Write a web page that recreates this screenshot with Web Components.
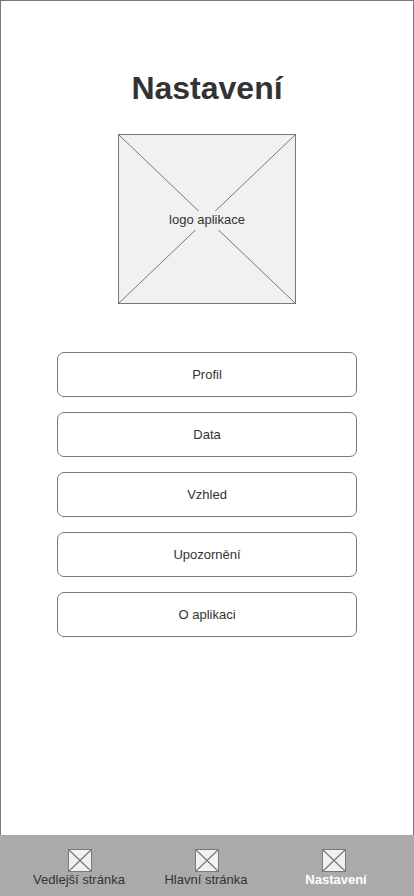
<!DOCTYPE html>
<html lang="cs">
<head>
<meta charset="utf-8">
<title>Nastavení</title>
<style>
html, body { margin: 0; height: 100%; }
body { font: 13px/15px "Liberation Sans", Arial, sans-serif; color: #333; background: #fff; overflow: hidden; }
</style>
</head>
<body>
<app-screen>
  <screen-title>Nastavení</screen-title>
  <image-placeholder>logo aplikace</image-placeholder>
  <settings-menu>
    <menu-button>Profil</menu-button>
    <menu-button>Data</menu-button>
    <menu-button>Vzhled</menu-button>
    <menu-button>Upozornění</menu-button>
    <menu-button>O aplikaci</menu-button>
  </settings-menu>
  <tab-bar slot="footer">
    <tab-item>Vedlejší stránka</tab-item>
    <tab-item>Hlavní stránka</tab-item>
    <tab-item active>Nastavení</tab-item>
  </tab-bar>
</app-screen>
<script>
const define = (name, html) => {
  const template = document.createElement('template');
  template.innerHTML = html;
  customElements.define(name, class extends HTMLElement {
    constructor() {
      super();
      this.attachShadow({ mode: 'open' }).append(template.content.cloneNode(true));
    }
  });
};

define('app-screen', `
<style>
:host { display: flex; flex-direction: column; width: 414px; height: 896px; }
main { flex: 1; box-sizing: border-box; border: 1px solid #797979; border-bottom: 0; display: flex; flex-direction: column; align-items: center; padding-top: 69px; }
</style>
<main><slot></slot></main><slot name="footer"></slot>`);

define('screen-title', `
<style>
:host { display: block; }
h1 { margin: 0; font-size: 32px; line-height: 36px; font-weight: 700; }
</style>
<h1><slot></slot></h1>`);

define('image-placeholder', `
<style>
:host { display: grid; width: 178px; height: 170px; margin-top: 28px; place-items: center; }
svg, span { grid-area: 1 / 1; }
svg { display: block; }
span { background: #f1f1f1; padding: 1px 2px 3px; margin-top: 2px; }
</style>
<svg width="178" height="170" viewBox="0 0 178 170" fill="none" stroke="#797979"><rect x=".5" y=".5" width="177" height="169" fill="#f1f1f1"/><path d="M.5 .5L177.5 169.5M177.5 .5L.5 169.5"/></svg>
<span><slot></slot></span>`);

define('settings-menu', `
<style>
:host { display: flex; flex-direction: column; gap: 15px; width: 300px; margin-top: 48px; }
</style>
<slot></slot>`);

define('menu-button', `
<style>
:host { display: block; }
button { display: flex; align-items: center; justify-content: center; width: 100%; height: 45px; box-sizing: border-box; padding: 0; border: 1px solid #797979; border-radius: 7px; background: #fff; font: inherit; color: inherit; }
</style>
<button><slot></slot></button>`);

define('tab-bar', `
<style>
:host { display: grid; grid-template-columns: repeat(3, 127px); justify-content: center; height: 61px; background: #aaa; }
</style>
<slot></slot>`);

define('tab-item', `
<style>
:host { display: flex; flex-direction: column; align-items: center; padding-top: 14px; white-space: nowrap; }
span { padding-right: 2px; }
:host([active]) { color: #fff; font-weight: 700; }
:host([active]) span { padding: 0 0 0 4px; }
svg { display: block; }
</style>
<svg width="24" height="23" viewBox="0 0 24 23" fill="none" stroke="#797979"><rect x=".5" y=".5" width="23" height="22" fill="#f1f1f1"/><path d="M.5 .5L23.5 22.5M23.5 .5L.5 22.5" stroke-width="1.2"/></svg>
<span><slot></slot></span>`);
</script>
</body>
</html>
